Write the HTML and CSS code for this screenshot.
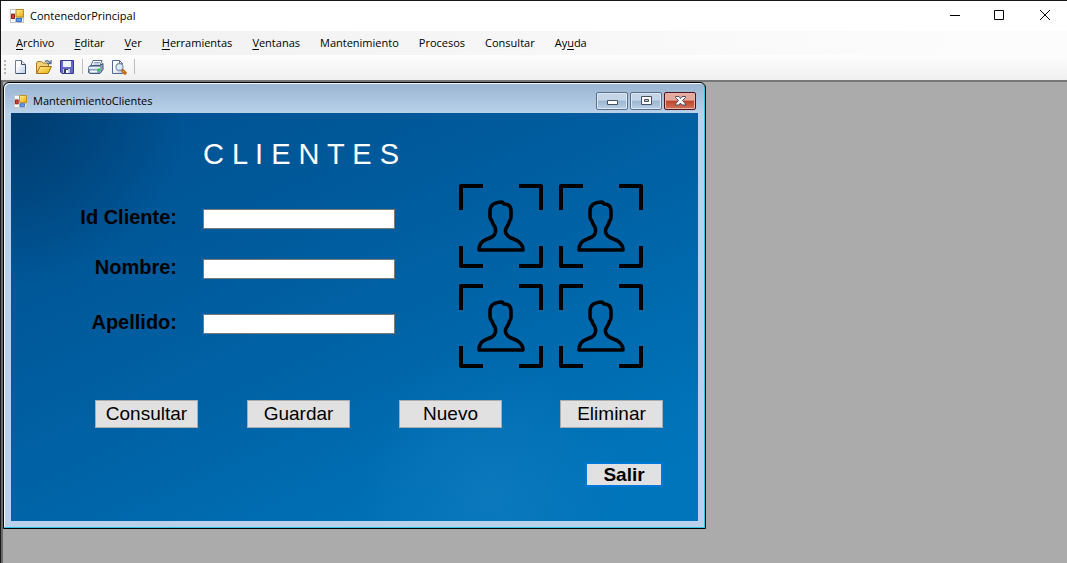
FILE: index.html
```html
<!DOCTYPE html>
<html lang="es">
<head>
<meta charset="utf-8">
<title>ContenedorPrincipal</title>
<link rel="stylesheet" href="styles.css">
</head>
<body>
<svg class="defs" aria-hidden="true">
  <defs>
    <linearGradient id="gold" x1="0" y1="0" x2="1" y2="1"><stop offset="0" stop-color="#fff3a0"/><stop offset="1" stop-color="#e9a800"/></linearGradient>
    <linearGradient id="sheet" x1="0" y1="0" x2="1" y2="1"><stop offset="0.3" stop-color="#fff"/><stop offset="1" stop-color="#b9cbe6"/></linearGradient>
    <symbol id="form-icon" viewBox="0 0 14 14">
      <path d="M0 0h14v14H0z" fill="#c4c4c4"/><path d="M1 1h5v3H1zM6 10h7v3h-7zM1 10h4v3H1zM5 5h1v4H5z" fill="#fff"/>
      <path d="M6 .5h7.500v7.500H6z" fill="url(#gold)" stroke="#b98a1c"/>
      <path d="M1.500 5.500h3v4h-3z" fill="#d8432f" stroke="#8e1d18"/>
      <path d="M6.500 9.500h5v3h-5z" fill="#62a2f0" stroke="#3569c2"/>
    </symbol>
    <symbol id="person" viewBox="0 0 84 84">
      <path d="M2 26V2H24M60 2H82V26M82 62V82H60M24 82H2V62" fill="none" stroke="#000" stroke-width="4" stroke-linejoin="round"/>
      <path d="M20 66C20 60 23 57 27 55.500L33 53Q36 51 36.500 48V45C36.500 42 33 40 33 37Q31 35 31 33V27C31 21 36 18 43 18L45 20C50 20 52 23 52 27V33Q52 36 50.500 37C50 41 47 43 46.500 46V48Q47 51 51 53.500L58 56.500C62 59 64 62 64 66Z" fill="none" stroke="#000" stroke-width="3.600" stroke-linejoin="round"/>
    </symbol>
  </defs>
</svg>
<div class="app">
  <header class="titlebar">
    <svg class="form-icon"><use href="#form-icon"/></svg>
    <h1 class="caption">ContenedorPrincipal</h1>
    <div class="window-controls">
      <button class="control" aria-label="Minimizar"><svg viewBox="0 0 12 12"><path d="M1 5.500h10"/></svg></button>
      <button class="control" aria-label="Maximizar"><svg viewBox="0 0 12 12"><path d="M.5 .5h9v9h-9z"/></svg></button>
      <button class="control" aria-label="Cerrar"><svg viewBox="0 0 12 12"><path d="M1 0l10 10M11 0L1 10"/></svg></button>
    </div>
  </header>
  <nav class="menubar">
    <button class="menu"><u>A</u>rchivo</button>
    <button class="menu"><u>E</u>ditar</button>
    <button class="menu"><u>V</u>er</button>
    <button class="menu"><u>H</u>erramientas</button>
    <button class="menu"><u>V</u>entanas</button>
    <button class="menu">Mantenimiento</button>
    <button class="menu">Procesos</button>
    <button class="menu">Consultar</button>
    <button class="menu">Ay<u>u</u>da</button>
  </nav>
  <div class="toolbar">
    <span class="grip"></span>
    <button class="tool" aria-label="Nuevo documento"><svg viewBox="0 0 16 16"><path d="M2.500 1.500h6l4 4v9h-10z" fill="url(#sheet)" stroke="#6a7f9f"/><path d="M8.500 1.500v4h4" fill="#dce6f4" stroke="#3f5272"/><path d="M12.500 6v8.500H3" fill="none" stroke="#34496c"/></svg></button>
    <button class="tool" aria-label="Abrir"><svg viewBox="0 0 16 16"><path d="M.5 14V4l1-1.500h4L7 4h5.500v3" fill="#f3d27a" stroke="#a87924"/><path d="M.5 14.500L4 7.500h11.500l-3.500 7z" fill="url(#gold)" stroke="#a66f16"/><path d="M9 2.500q3-2 5 1.500M15 1v3.500h-4" fill="none" stroke="#596f92" stroke-width="1.300"/></svg></button>
    <button class="tool" aria-label="Guardar archivo"><svg viewBox="0 0 16 16"><path d="M1.500 1.500h13v13H3l-1.500-1.500z" fill="#6267c9" stroke="#343997"/><path d="M4 2h8v6H4z" fill="#eef3fd"/><path d="M4 10h7v4H4z" fill="#c2c9d9"/><path d="M5 10h4v4H5z" fill="#333c5b"/><path d="M7 11h2v3H7z" fill="#fff"/></svg></button>
    <span class="divider"></span>
    <button class="tool" aria-label="Imprimir"><svg viewBox="0 0 16 16"><path d="M5 1.500h9l-2 5H3z" fill="#fff" stroke="#53688b"/><path d="M6 3.500h6M5.500 5h6" stroke="#8da1c1"/><path d="M1 7.500l2-1h9l3-2v6l-3 4H2l-1.500-1z" fill="#8a9fbd" stroke="#43597d"/><path d="M1 8h11v2H1z" fill="#e2eaf5"/><path d="M2 11.500h7v2H2z" fill="#f7f9fc"/><path d="M9.500 9.500h2.500v2.500H9.500z" fill="#1ddb2c"/></svg></button>
    <button class="tool" aria-label="Vista previa"><svg viewBox="0 0 16 16"><path d="M1.500 1.500h7l3 3v10h-10z" fill="url(#sheet)" stroke="#526a91"/><path d="M8.500 1.500v3h3" fill="none" stroke="#526a91"/><circle cx="8.500" cy="8" r="3.500" fill="#dcecf8" stroke="#8396ae" stroke-width="1.300"/><path d="M11 10.500l1 1" stroke="#555" stroke-width="2"/><path d="M12 12l2 2" stroke="#c66c20" stroke-width="3.500" stroke-linecap="round"/><path d="M12 12l1 1" stroke="#f2b45c"/></svg></button>
    <span class="divider"></span>
  </div>
  <main class="workspace">
    <section class="child">
      <div class="child-title">
        <svg class="form-icon small"><use href="#form-icon"/></svg>
        <h2 class="caption">MantenimientoClientes</h2>
        <div class="child-controls">
          <button class="glass" aria-label="Minimizar ventana"><svg viewBox="0 0 13 11"><path d="M1.500 4.500h10v4h-10z"/></svg></button>
          <button class="glass" aria-label="Maximizar ventana"><svg viewBox="0 0 13 11"><path fill-rule="evenodd" d="M1.500 .5h10v8h-10zM4.500 3.500h4v2h-4z"/></svg></button>
          <button class="glass close" aria-label="Cerrar ventana"><svg viewBox="0 0 13 11"><path d="M1.500 .5h3.500l1.500 2L8 .5h3.500v1L8.500 4.500l3 3.500v1H8L6.500 7 5 9H1.500V8l3-3.500-3-3z"/></svg></button>
        </div>
      </div>
      <form class="client">
        <h3 class="heading">C L I E N T E S</h3>
        <div class="details">
          <div class="fields">
            <label for="id-cliente">Id Cliente:</label><input id="id-cliente" type="text">
            <label for="nombre">Nombre:</label><input id="nombre" type="text">
            <label for="apellido">Apellido:</label><input id="apellido" type="text">
          </div>
          <div class="people">
            <svg class="person"><use href="#person"/></svg>
            <svg class="person"><use href="#person"/></svg>
            <svg class="person"><use href="#person"/></svg>
            <svg class="person"><use href="#person"/></svg>
          </div>
        </div>
        <div class="actions">
          <button class="action" type="button">Consultar</button>
          <button class="action" type="button">Guardar</button>
          <button class="action" type="button">Nuevo</button>
          <button class="action last" type="button">Eliminar</button>
        </div>
        <button class="action exit" type="button">Salir</button>
      </form>
    </section>
  </main>
</div>
</body>
</html>
```
FILE: styles.css
```css
* { box-sizing: border-box; }
body { margin: 0; font-family: "Open Sans", "Noto Sans", sans-serif; font-size: 12px; color: #000; }
button { font: inherit; color: inherit; padding: 0; border: 0; background: none; }
h1, h2, h3 { margin: 0; font-weight: 400; }
svg { display: block; }
.defs { position: absolute; width: 0; height: 0; }

.app { display: flex; flex-direction: column; min-height: 100vh; border-top: 1px solid #171717; border-left: 1px solid #171717; background: #fff; }
.caption { font-size: 11px; line-height: 16px; }
.form-icon { width: 14px; height: 14px; flex: none; }
.form-icon.small { width: 13px; height: 13px; }

.titlebar { display: flex; align-items: center; gap: 6px; height: 30px; padding-left: 9px; }
.window-controls { display: flex; margin-left: auto; }
.control { display: grid; place-items: center; width: 45px; height: 30px; }
.control svg { width: 12px; height: 12px; fill: none; stroke: #000; stroke-width: 1; }

.menubar { display: flex; align-items: center; gap: 20px; height: 24px; padding-left: 15px; font-size: 11px; background: linear-gradient(90deg, #f0f0f0, #fcfcfc 90%); }
.menu { line-height: 16px; white-space: nowrap; }
.menu u { text-underline-offset: 2px; }

.toolbar { display: flex; align-items: center; gap: 7px; height: 25px; padding: 0 0 2px 3px; background: linear-gradient(#fdfdfd, #f0f0f0); }
.grip { width: 2px; height: 14px; background: repeating-linear-gradient(#b4b4b4 0 2px, transparent 2px 4px); }
.tool svg { width: 16px; height: 16px; }
.divider { width: 1px; height: 15px; margin-right: -2px; background: #bdbdbd; }

.workspace { flex: 1; border-top: 2px solid #777; border-left: 2px solid #696969; background: #ababab; }
.child { width: 703px; max-width: 100%; padding: 0 7px 7px; border: 1px solid #000; border-radius: 6px 6px 0 0; background: linear-gradient(#99b4d1, #b9d1ea 30px, #b9d1ea); box-shadow: inset -1px -1px #35c5e4, inset 1px 1px #f4f9ff; }
.child-title { display: flex; align-items: center; gap: 6px; height: 30px; padding: 6px 2px 0 3px; }
.child-controls { display: flex; gap: 2px; margin-left: auto; }
.glass { display: grid; place-items: center; width: 32px; height: 18px; border: 1px solid #5d6f87; border-radius: 2px; background: linear-gradient(#c4d5e8 45%, #9cb5d0 50%, #b9d0e8); box-shadow: inset 0 0 0 1px #dce8f4; }
.glass svg { width: 13px; height: 11px; }
.glass path { fill: #fff; stroke: #47505e; stroke-width: 1; }
.glass.close { border-color: #4c1420; background: linear-gradient(#e5a99d 45%, #c24327 50%, #d0735a); box-shadow: inset 0 0 0 1px #e9b4a6; }

.client { display: flex; flex-direction: column; padding: 24px 35px 34px 0; font-family: "Liberation Sans", Arial, sans-serif; font-size: 19px; background: radial-gradient(circle at 70% 94%, rgba(16, 122, 190, 0.7), transparent 22%), radial-gradient(circle at 0 0, rgba(0, 52, 98, 0.75), transparent 22%), linear-gradient(155deg, #005091, #005a9b 32%, #0066aa 60%, #0073b9 85%, #0076bc); }
.heading { padding-left: 192px; font-size: 29px; line-height: 34px; color: #fff; }
.details { display: flex; justify-content: space-between; padding: 13px 20px 0 0; }
.fields { display: grid; grid-template: 20px 20px 25px / 166px 192px; gap: 30px 26px; align-items: end; align-content: start; padding-top: 25px; font-size: 20px; font-weight: 700; line-height: 24px; }
.fields label { text-align: right; white-space: nowrap; }
.fields input { width: 100%; height: 20px; padding: 1px 3px; border: 1px solid #7a7a7a; background: #fff; font: inherit; font-weight: 400; font-size: 13px; }
.people { display: grid; grid-template-columns: 84px 84px; gap: 16px; }
.person { width: 84px; height: 84px; }
.actions { display: flex; gap: 49px; padding: 32px 0 34px 84px; }
.action { width: 103px; height: 28px; border: 1px solid #adadad; background: #e1e1e1; }
.action.last { margin-left: auto; }
.exit { align-self: flex-end; width: 78px; height: 25px; border: 2px solid #0078d7; font-weight: 700; }
```
